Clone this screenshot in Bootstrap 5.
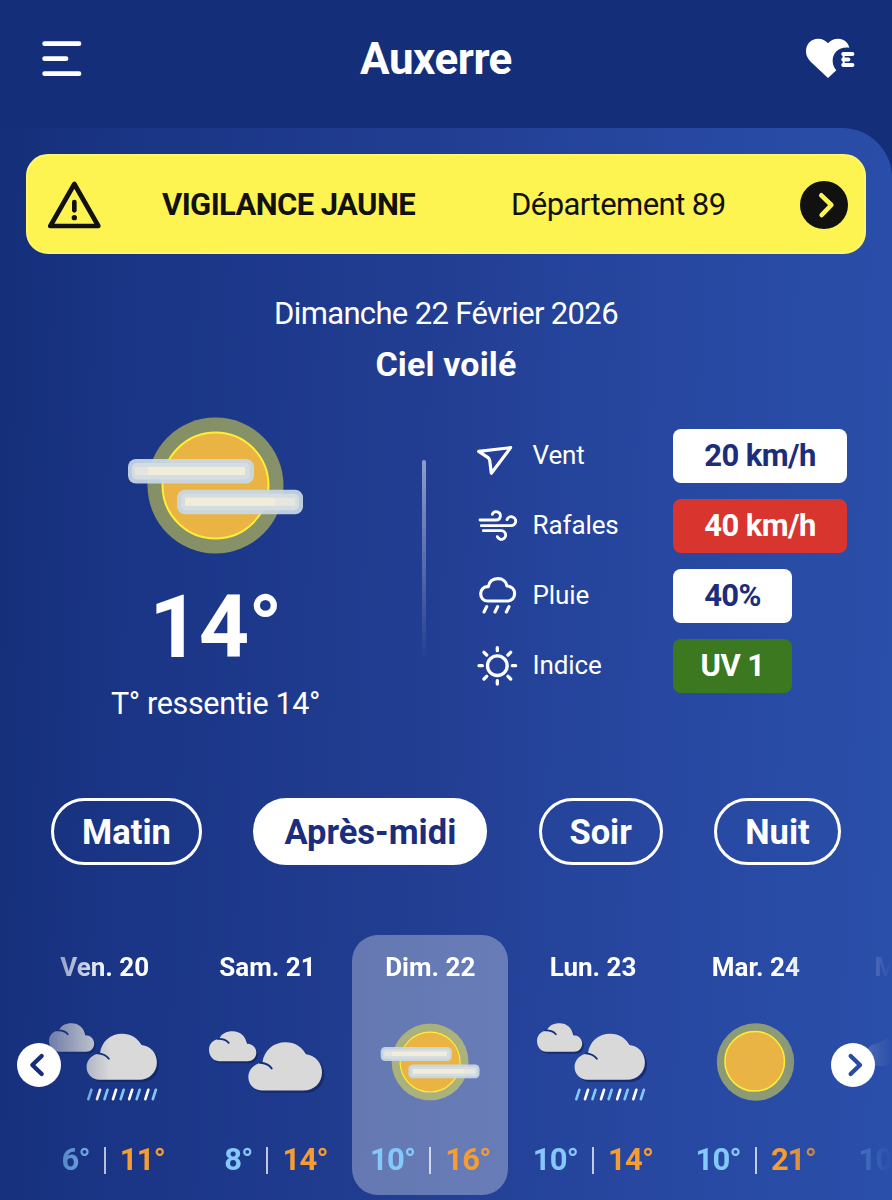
<!DOCTYPE html>
<html lang="fr">
<head>
<meta charset="utf-8">
<meta name="viewport" content="width=device-width, initial-scale=1">
<title>Auxerre</title>
<link href="https://cdn.jsdelivr.net/npm/bootstrap@5.3.0/dist/css/bootstrap.min.css" rel="stylesheet">
<style>
body{font-family:Roboto,"Liberation Sans",sans-serif;background:#152e79;color:#fff;width:892px;height:1200px;overflow:hidden}
svg{display:block;flex:none}
.topbar{height:128px;padding:0 37px 11px 42px}
.city{font-size:44px;line-height:52px;letter-spacing:-.5px;padding-right:16px}
.panel{height:1072px;border-radius:0 50px 0 0;background:linear-gradient(92deg,#152f7a 0%,#1a3585 15%,#213d91 45%,#2747a0 72%,#2a4faa 100%);padding-top:26px}
.vigilance{height:100px;margin:0 26px;border-radius:22px;background:#fdf452;border:2px solid #fff66c;color:#111;padding:1px 16px 0 20px;font-size:31px}
.vigilance .level{font-weight:700;letter-spacing:-.6px;margin-left:61px;width:256px;padding-top:2px}
.vigilance .dept{margin-left:93px;white-space:nowrap;letter-spacing:-.55px;padding-top:2px}
.date{font-size:31px;line-height:38px;margin-top:41px;letter-spacing:-.65px}
.sky{font-size:34px;line-height:40px;margin-top:11px;letter-spacing:.15px}
.now{height:330px;padding-top:33px}
.now-left{width:431px}
.temp{font-size:88px;line-height:90px;margin-top:28px;letter-spacing:-1px}
.felt{font-size:30.5px;line-height:36px;margin-top:14px;letter-spacing:-.35px}
.rule{width:4px;height:200px;margin:43px 0 0 -9px;border-radius:2px;background:linear-gradient(#8f9dcb,rgba(143,157,203,0))}
.facts{margin:12px 0 0 50px;gap:16px}
.fact{height:54px}
.fact .name{font-size:26px;width:140.500px;margin-left:14.500px;padding-bottom:1px;letter-spacing:-.1px}
.pill{height:54px;width:174px;border-radius:8px;font-size:31px;font-weight:700;background:#fff;color:#1b2d7b;letter-spacing:-.6px}
.pill.short{width:119px}
.pill.gust{background:#d8352e;color:#fff}
.pill.uv{background:#3b781f;color:#fff}
.periods{padding:0 51px;margin-top:84px}
.period{height:67px;border:3px solid #fff;border-radius:34px;font-size:34.5px;font-weight:700;line-height:62px;padding:0;color:#fff;text-align:center}
.period.on{background:#fff;color:#1b2d7b}
.p1{width:151px}.p2{width:234px}.p3{width:124px}.p4{width:127px}
.days{margin-top:70px;height:261px;position:relative}
.strip{overflow:hidden;height:261px;padding-left:23.3px;-webkit-mask-image:linear-gradient(90deg,transparent,#000 110px,#000 785px,transparent 892px);mask-image:linear-gradient(90deg,transparent,#000 110px,#000 785px,transparent 892px)}
.day{width:162.8px;flex:none}
.tile{width:156px;height:260px;margin:0 auto;border-radius:26px;padding-top:16px}
.tile.on{background:rgba(255,255,255,.31)}
.dname{font-size:26px;line-height:32px;font-weight:700}
.pic{height:90px;margin-top:34px}
.wet{margin:0 0 0 22px;padding-top:5.500px;box-sizing:content-box}
.grey{margin:0 0 0 20px;padding-top:5.500px;box-sizing:content-box}
.temps{font-size:31px;line-height:36px;font-weight:700;margin-top:35px;width:156px;letter-spacing:-.8px}
.temps span{flex:1 1 0}
.lo{color:#85c8fb;text-align:right;padding-right:14px}
.hi{color:#f59c33;text-align:left;padding-left:14px}
.temps i{width:2px;height:27px;background:rgba(255,255,255,.72)}
.arrow{position:absolute;top:108px;width:44px;height:44px}
.arrow.prev{left:17px}.arrow.next{left:831px}
</style>
</head>
<body>
<svg width="0" height="0" class="position-absolute">
  <symbol id="veil" viewBox="127.5 417 176 137">
    <circle cx="215.5" cy="485.5" r="68" fill="#f0ea46" fill-opacity=".5"/>
    <circle cx="215.5" cy="485.5" r="53" fill="#e9b444" stroke="#ffee37" stroke-width="2"/>
    <rect x="128" y="459" width="126" height="24.6" rx="8" fill="#c9d7e5" fill-opacity=".93"/>
    <rect x="132" y="463" width="118" height="16.6" rx="5" fill="#d3dde2"/>
    <rect x="135" y="467" width="110" height="8" rx="1" fill="#e2e5e0"/>
    <rect x="148" y="467" width="97" height="8" fill="#f2ecda"/>
    <rect x="177" y="489.7" width="126" height="24.6" rx="8" fill="#c9d7e5" fill-opacity=".93"/>
    <rect x="181" y="493.7" width="118" height="16.6" rx="5" fill="#d3dde2"/>
    <rect x="185" y="497.7" width="110" height="8" rx="1" fill="#e6e7df"/>
    <rect x="185" y="497.7" width="90" height="8" fill="#f2ecda"/>
  </symbol>
  <symbol id="clouds" viewBox="628 330 350 192">
    <path d="M658 422C641 422 628 407 628 388C628 370 641 357 659 355C664 340 680 332 699 332C722 332 738 347 742 370C757 370 770 381 770 396C770 411 759 422 744 422Z" fill="#122562" fill-opacity=".75" transform="translate(5 6)"/>
    <path d="M658 422C641 422 628 407 628 388C628 370 641 357 659 355C664 340 680 332 699 332C722 332 738 347 742 370C757 370 770 381 770 396C770 411 759 422 744 422Z" fill="#d9d9d9"/>
    <path d="M654 355Q677 354 687 367" fill="none" stroke="#152e79" stroke-width="5.500" stroke-linecap="round"/>
    <path d="M787 510C763 510 746 492 746 469C746 447 764 429 788 427C793 388 822 365 858 365C885 365 907 379 919 401C947 404 967 427 967 455C967 487 943 510 911 510Z" fill="#122562" fill-opacity=".75" transform="translate(7 7)"/>
    <path d="M787 510C763 510 746 492 746 469C746 447 764 429 788 427C793 388 822 365 858 365C885 365 907 379 919 401C947 404 967 427 967 455C967 487 943 510 911 510Z" fill="#d9d9d9"/>
    <path d="M781 427Q805 428 816 444" fill="none" stroke="#152e79" stroke-width="6" stroke-linecap="round"/>
  </symbol>
  <symbol id="rain" viewBox="147 307 336 236">
    <use href="#clouds" x="147" y="307" width="334.2" height="183.4"/>
    <g stroke-width="8" stroke-linecap="round">
      <path stroke="#85c8f5" d="M265 537L274 509M313.500 537L322.500 509M362 537L371 509M410 537L419 509M458.500 537L467.500 509"/>
      <path stroke="#fff" d="M291 537L300 509M339 537L348 509M387.500 537L396.500 509M436 537L445 509"/>
    </g>
  </symbol>
</svg>

<header class="topbar d-flex align-items-center justify-content-between">
  <svg width="40" height="36" viewBox="125 122 120 108" stroke="#fff" stroke-width="14.500" stroke-linecap="round"><path d="M133 130H236M133 175H197M133 220H236"/></svg>
  <h1 class="city fw-bold m-0">Auxerre</h1>
  <svg width="49" height="41" viewBox="1080 114 147 123" fill="#fff"><path d="M1146 234L1098 189C1085 177 1080 166 1080 153C1080 132 1096 116 1116 116C1129 116 1139 121 1146 130C1153 121 1163 116 1177 116C1194 116 1206 127 1210 143C1180 139 1160 158 1160 182C1160 194 1164 203 1171 211Z"/><path d="M1192 162H1219M1192 178.500H1207M1192 195H1219" stroke="#fff" stroke-width="12.500" stroke-linecap="round"/><path d="M1193 162V195" stroke="#fff" stroke-width="6"/></svg>
</header>

<main class="panel">
  <div class="vigilance d-flex align-items-center">
    <svg width="53" height="48" viewBox="144 543 159 144" fill="none" stroke="#111" stroke-linecap="round" stroke-linejoin="round"><path d="M223 552L151 678H295Z" stroke-width="14"/><path d="M223 606V631" stroke-width="14"/><circle cx="223" cy="653" r="8" fill="#111" stroke="none"/></svg>
    <span class="level text-nowrap">VIGILANCE JAUNE</span>
    <span class="dept">Département 89</span>
    <svg class="ms-auto" width="48" height="48" viewBox="1062 543 144 144"><circle cx="1134" cy="615" r="72" fill="#111"/><path d="M1126 586L1156 615L1127 645" fill="none" stroke="#fdf452" stroke-width="14" stroke-linecap="round" stroke-linejoin="round"/></svg>
  </div>
  <div class="date text-center">Dimanche 22 Février 2026</div>
  <h2 class="sky fw-bold text-center mb-0">Ciel voilé</h2>

  <section class="now d-flex align-items-start">
    <div class="now-left d-flex flex-column align-items-center">
      <svg width="176" height="137" viewBox="0.500 0 176 137"><use href="#veil" width="176" height="137"/></svg>
      <div class="temp fw-bold">14°</div>
      <div class="felt">T° ressentie 14°</div>
    </div>
    <div class="rule"></div>
    <div class="facts d-flex flex-column">
      <div class="fact d-flex align-items-center">
        <svg width="42" height="41.300" viewBox="78 76 126 124" fill="none" stroke="#fff" stroke-width="9.500" stroke-linejoin="round"><path d="M86 125L182 114L124 191L119 152Q118 147 113 143Z"/></svg>
        <span class="name">Vent</span><span class="pill d-flex align-items-center justify-content-center">20 km/h</span>
      </div>
      <div class="fact d-flex align-items-center">
        <svg width="42" height="41.300" viewBox="78 286 126 124" fill="none" stroke="#fff" stroke-width="8.500" stroke-linecap="round"><path d="M90 331H138A12.500 12.500 0 1 0 127 314M94 348H183A13.500 13.500 0 1 0 171 330M100 363H152A13 13 0 1 1 142 381"/></svg>
        <span class="name">Rafales</span><span class="pill gust d-flex align-items-center justify-content-center">40 km/h</span>
      </div>
      <div class="fact d-flex align-items-center">
        <svg width="42" height="41.300" viewBox="78 496 126 124" fill="none" stroke="#fff" stroke-width="9.500" stroke-linecap="round" stroke-linejoin="round"><path d="M114 574C100 574 92 564 92 552C92 540 101 530 115 531C117 516 128 507 143 507C158 507 169 516 171 529C185 530 194 539 194 551C194 565 185 574 171 574Z"/><path d="M110 591L102 607M143 591L135 607M177 591L169 607"/></svg>
        <span class="name">Pluie</span><span class="pill short d-flex align-items-center justify-content-center">40%</span>
      </div>
      <div class="fact d-flex align-items-center">
        <svg width="42" height="41.300" viewBox="79 706 126 124" fill="none" stroke="#fff" stroke-width="10" stroke-linecap="round"><circle cx="143" cy="768" r="29.500"/><path d="M143 714V723M143 813V823M88 768H98M188 768H198M103 728L111 736M183 728L175 736M103 808L111 800M183 808L175 800"/></svg>
        <span class="name">Indice</span><span class="pill short uv d-flex align-items-center justify-content-center">UV 1</span>
      </div>
    </div>
  </section>

  <nav class="periods d-flex justify-content-between">
    <a class="period p1 text-decoration-none">Matin</a>
    <a class="period p2 on text-decoration-none">Après-midi</a>
    <a class="period p3 text-decoration-none">Soir</a>
    <a class="period p4 text-decoration-none">Nuit</a>
  </nav>

  <section class="days">
    <div class="strip d-flex">
      <div class="day"><div class="tile text-center">
        <div class="dname">Ven. 20</div>
        <div class="pic"><svg class="wet" width="112" height="78.700"><use href="#rain"/></svg></div>
        <div class="temps d-flex align-items-center"><span class="lo">6°</span><i></i><span class="hi">11°</span></div>
      </div></div>
      <div class="day"><div class="tile text-center">
        <div class="dname">Sam. 21</div>
        <div class="pic pt-2"><svg class="grey" width="116.700" height="64"><use href="#clouds"/></svg></div>
        <div class="temps d-flex align-items-center"><span class="lo">8°</span><i></i><span class="hi">14°</span></div>
      </div></div>
      <div class="day"><div class="tile on text-center">
        <div class="dname">Dim. 22</div>
        <div class="pic"><svg class="mx-auto" width="99.600" height="88"><use href="#veil" width="99.600" height="77.500" x=".3" y="6.300"/></svg></div>
        <div class="temps d-flex align-items-center"><span class="lo">10°</span><i></i><span class="hi">16°</span></div>
      </div></div>
      <div class="day"><div class="tile text-center">
        <div class="dname">Lun. 23</div>
        <div class="pic"><svg class="wet" width="112" height="78.700"><use href="#rain"/></svg></div>
        <div class="temps d-flex align-items-center"><span class="lo">10°</span><i></i><span class="hi">14°</span></div>
      </div></div>
      <div class="day"><div class="tile text-center">
        <div class="dname">Mar. 24</div>
        <div class="pic"><svg class="mx-auto" width="80" height="88" viewBox="0 0 80 88"><circle cx="39.500" cy="45" r="38.700" fill="#f0ea46" fill-opacity=".5"/><circle cx="38.700" cy="44.300" r="29.800" fill="#e9b444" stroke="#ffee37" stroke-width="1.500"/></svg></div>
        <div class="temps d-flex align-items-center"><span class="lo">10°</span><i></i><span class="hi">21°</span></div>
      </div></div>
      <div class="day"><div class="tile text-center">
        <div class="dname">Mer. 25</div>
        <div class="pic"><svg class="mx-auto" width="110" height="88" viewBox="0 0 110 88"><path d="M14 49C6 49 2 43 2 37C2 30 8 27 14 26C22 22 28 18 38 18C52 18 60 25 64 33C74 34 80 39 80 46V49Z" fill="#d9d9d9" fill-opacity=".8"/></svg></div>
        <div class="temps d-flex align-items-center"><span class="lo">10°</span><i></i><span class="hi">18°</span></div>
      </div></div>
    </div>
    <svg class="arrow prev" viewBox="0 0 132 132"><circle cx="66" cy="66" r="66" fill="#fff"/><path d="M74 39L46 66L74 93" fill="none" stroke="#152e79" stroke-width="13" stroke-linecap="round" stroke-linejoin="round"/></svg>
    <svg class="arrow next" viewBox="0 0 132 132"><circle cx="66" cy="66" r="66" fill="#fff"/><path d="M59 39L87 66L59 93" fill="none" stroke="#284aa3" stroke-width="13" stroke-linecap="round" stroke-linejoin="round"/></svg>
  </section>
</main>
<script src="https://cdn.jsdelivr.net/npm/bootstrap@5.3.0/dist/js/bootstrap.bundle.min.js"></script>
</body>
</html>
